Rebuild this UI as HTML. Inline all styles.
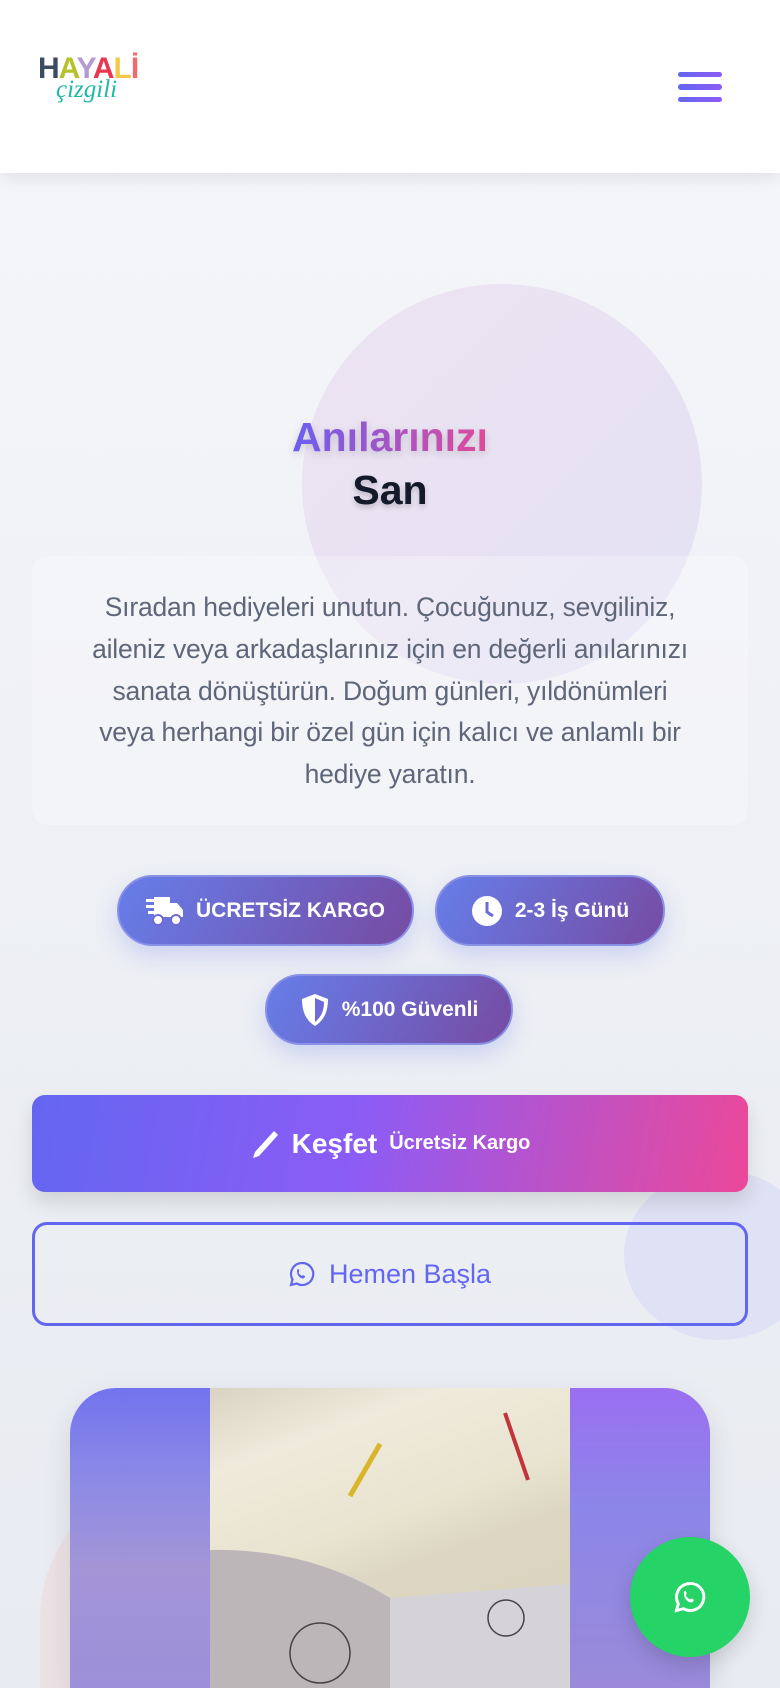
<!DOCTYPE html>
<html style="width:780px;height:1688px;overflow:hidden"><head><meta charset="utf-8"><style>
*{margin:0;padding:0;box-sizing:border-box}
body{width:780px;height:1688px;overflow:hidden;font-family:"Liberation Sans",sans-serif;background:linear-gradient(180deg,#f6f7fa 0%,#eef0f5 50%,#e8ebf1 100%);position:relative}
.hdr{position:absolute;left:0;top:0;width:780px;height:173px;background:#fff;box-shadow:0 6px 16px rgba(0,0,0,.08);z-index:5}
.bar{position:absolute;left:678px;width:44px;height:5px;border-radius:3px;background:linear-gradient(90deg,#6366f1,#8b5cf6)}
.circ{position:absolute;border-radius:50%}
.t1{position:absolute;left:0;width:780px;text-align:center;font-weight:bold;font-size:41px}
.para{position:absolute;left:32px;top:556px;width:716px;height:269px;background:rgba(255,255,255,.25);border-radius:16px;text-align:center;color:#5e6779;font-size:26.5px;line-height:41.8px;padding-top:31px;letter-spacing:-0.2px}
.badge{position:absolute;height:71px;border-radius:36px;background:linear-gradient(120deg,#667eea,#764ba2);border:2px solid #8a90e6;box-shadow:0 10px 22px rgba(102,126,234,.25);color:#fff;font-weight:bold;font-size:21px;display:flex;align-items:center;justify-content:center;gap:12px}
.btn1{position:absolute;left:32px;top:1095px;width:716px;height:97px;border-radius:13px;background:linear-gradient(100deg,#6366f1 0%,#8b5cf6 45%,#ec4899 100%);box-shadow:0 10px 20px rgba(0,0,0,.12);color:#fff;display:flex;align-items:center;justify-content:center;gap:12px}
.btn2{position:absolute;left:32px;top:1222px;width:716px;height:104px;border-radius:15px;border:3.5px solid #6366f1;color:#6366f1;font-size:27px;display:flex;align-items:center;justify-content:center;gap:14px}
</style></head><body>
<div class="circ" style="left:302px;top:284px;width:400px;height:400px;background:linear-gradient(135deg,#ede3f1,#e3e2f4)"></div>
<div class="circ" style="left:624px;top:1170px;width:190px;height:170px;background:#dfe2f4"></div>
<div class="circ" style="left:40px;top:1470px;width:300px;height:218px;border-radius:150px 150px 0 0;background:#ece2e6"></div>
<div class="hdr">
 <div style="position:absolute;left:38px;top:52px;font-weight:bold;font-size:30px;letter-spacing:-1px;line-height:34px">
  <span style="color:#3c4a62">H</span><span style="color:#b5c22e">A</span><span style="color:#b39ad2">Y</span><span style="color:#e8374f">A</span><span style="color:#f6c84a">L</span><span style="color:#f26a6a">İ</span>
 </div>
 <div style="position:absolute;left:56px;top:76px;font-style:italic;font-size:25px;color:#1fb9a4;font-family:'Liberation Serif',serif">çizgili</div>
 <div class="bar" style="top:72px"></div><div class="bar" style="top:84px;height:6px"></div><div class="bar" style="top:97px"></div>
</div>
<div class="t1" style="top:414px"><span style="background:linear-gradient(90deg,#6a5ff0,#e04a9a);-webkit-background-clip:text;color:transparent;filter:drop-shadow(0 3px 4px rgba(0,0,0,.15))">Anılarınızı</span></div>
<div class="t1" style="top:467px;color:#141a29;text-shadow:0 3px 6px rgba(0,0,0,.2)">San</div>
<div class="para">Sıradan hediyeleri unutun. Çocuğunuz, sevgiliniz,<br>aileniz veya arkadaşlarınız için en değerli anılarınızı<br>sanata dönüştürün. Doğum günleri, yıldönümleri<br>veya herhangi bir özel gün için kalıcı ve anlamlı bir<br>hediye yaratın.</div>
<div class="badge" style="left:117px;top:875px;width:297px"><svg width="38" height="32" viewBox="0 0 38 32"><rect x="0" y="4" width="10" height="3" fill="#fff"/><rect x="0" y="10" width="8" height="3" fill="#fff"/><rect x="2" y="16" width="8" height="3" fill="#fff"/><path d="M8 2h16v20H8zM24 8h7l6 7v7H24z" fill="#fff"/><circle cx="12" cy="25" r="5" fill="#fff" stroke="#6e6ad8" stroke-width="2"/><circle cx="30" cy="25" r="5" fill="#fff" stroke="#6e6ad8" stroke-width="2"/></svg>ÜCRETSİZ KARGO</div>
<div class="badge" style="left:435px;top:875px;width:230px"><svg width="32" height="32" viewBox="0 0 32 32"><circle cx="16" cy="16" r="15" fill="#fff"/><path d="M16 7v10l6 4" stroke="#6e6ad8" stroke-width="3" fill="none"/></svg>2-3 İş Günü</div>
<div class="badge" style="left:265px;top:974px;width:248px"><svg width="30" height="34" viewBox="0 0 30 34"><path d="M15 1L28 6c0 14-5 22-13 27C7 28 2 20 2 6z" fill="#fff"/><path d="M15 5v24c5-4 9-10 9-20z" fill="#6e6ad8"/></svg>%100 Güvenli</div>
<div class="btn1"><svg width="30" height="30" viewBox="0 0 30 30"><path d="M24 2l4 4L9 27l-6 2 2-6z" fill="#fff"/></svg><span style="font-weight:bold;font-size:28px">Keşfet</span><span style="font-weight:bold;font-size:20px">Ücretsiz Kargo</span></div>
<div class="btn2"><svg width="26" height="26" viewBox="0 0 26 26"><path d="M13 2a11 11 0 0 0-9.5 16.5L2 24l5.7-1.5A11 11 0 1 0 13 2z" fill="none" stroke="#6366f1" stroke-width="2.2"/><path d="M9 8c1 0 1.5 2.5 1 3s-.5 1 1 2.5 2 1.5 2.5 1 2.5 0 2.5 1-1 2-2.5 2S8 15 8 10c0-1 .5-2 1-2z" fill="#6366f1"/></svg><span>Hemen Başla</span></div>
<div style="position:absolute;left:70px;top:1388px;width:640px;height:300px;border-radius:46px 46px 0 0;overflow:hidden;background:linear-gradient(180deg,#7373ef 0%,#8c8ae6 30%,#a395d6 60%,#9d8fd9 100%);box-shadow:0 10px 30px rgba(0,0,0,.1)">
 <div style="position:absolute;right:0;top:0;width:140px;height:300px;background:linear-gradient(180deg,#9a6ff1,#8c86e8 40%,#9a8ad9)"></div>
 <div style="position:absolute;left:140px;top:0;width:360px;height:300px;background:linear-gradient(160deg,#d9d3c3 0%,#efeadb 20%,#e9e4d0 45%,#dcd6c2 58%,#d8d2bd 100%)"></div>
 <svg style="position:absolute;left:140px;top:0" width="360" height="300" viewBox="0 0 360 300">
  <line x1="170" y1="56" x2="140" y2="108" stroke="#d9b52a" stroke-width="5"/>
  <line x1="295" y1="25" x2="318" y2="92" stroke="#c0343a" stroke-width="4"/>
  <path d="M0 162 Q100 160 180 210 L360 196 V300 H0z" fill="#d6d3d8"/>
  <path d="M0 162 Q100 160 180 210 V300 H0z" fill="#bdb6b8"/>
  <circle cx="110" cy="265" r="30" fill="none" stroke="#444" stroke-width="1.5"/>
  <circle cx="296" cy="230" r="18" fill="none" stroke="#444" stroke-width="1.5"/>
 </svg>
</div>
<div class="circ" style="left:630px;top:1537px;width:120px;height:120px;background:#25d366;box-shadow:0 8px 20px rgba(0,0,0,.15)"><svg style="position:absolute;left:44px;top:44px" width="32" height="32" viewBox="0 0 26 26"><path d="M13 2a11 11 0 0 0-9.5 16.5L2 24l5.7-1.5A11 11 0 1 0 13 2z" fill="none" stroke="#fff" stroke-width="2.4"/><path d="M9 8c1 0 1.5 2.5 1 3s-.5 1 1 2.5 2 1.5 2.5 1 2.5 0 2.5 1-1 2-2.5 2S8 15 8 10c0-1 .5-2 1-2z" fill="#fff"/></svg></div>
</body></html>
